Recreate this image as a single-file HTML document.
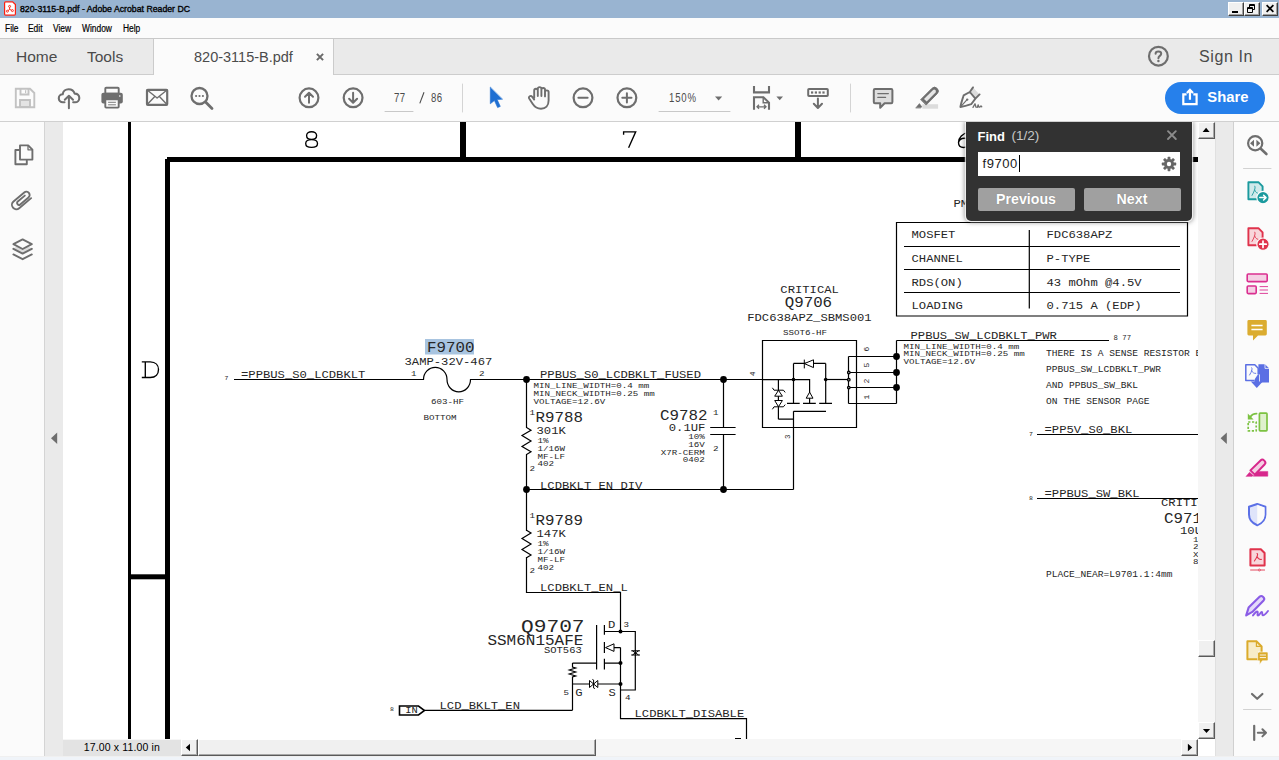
<!DOCTYPE html>
<html>
<head>
<meta charset="utf-8">
<title>820-3115-B.pdf - Adobe Acrobat Reader DC</title>
<style>
*{box-sizing:border-box;margin:0;padding:0}
html,body{width:1279px;height:760px;overflow:hidden;background:#fafafa;font-family:"Liberation Sans",sans-serif;}
.abs{position:absolute}
#titlebar{left:0;top:0;width:1279px;height:18px;background:#99b4d1}
#titletext{left:19.6px;top:2.7px;font-size:9.5px;line-height:12px;color:#000;white-space:nowrap;transform:scaleX(0.918);transform-origin:0 0;-webkit-text-stroke:0.35px #000}
#menubar{left:0;top:18px;width:1279px;height:20px;background:#fbfbfb}
#menubar span{position:absolute;top:3.6px;font-size:10px;line-height:13px;color:#000;transform:scaleX(0.84);transform-origin:0 0;-webkit-text-stroke:0.2px #000}
#tabbar{left:0;top:38px;width:1279px;height:37px;background:#eaeaea;border-top:1px solid #c9c9c9;border-bottom:1px solid #cdcdcd}
#tabactive{left:153px;top:39px;width:181px;height:36px;background:#fbfbfb;border-left:1px solid #cbcbcb;border-right:1px solid #cbcbcb}
.tabtxt{position:absolute;font-size:15.5px;line-height:18px;color:#4b4b4b;white-space:nowrap}
#toolbar{left:0;top:75px;width:1279px;height:47px;background:#fbfbfb;border-bottom:1px solid #d0d0d0}
#leftbar{left:0;top:122px;width:45px;height:634px;background:#fbfbfb;border-right:1px solid #d4d4d4}
#leftgut{left:45px;top:122px;width:18px;height:634px;background:#eaeaea}
#rightgut{left:1215px;top:122px;width:19px;height:634px;background:#eaeaea;border-right:1px solid #d0d0d0;border-left:1px solid #e0e0e0}
#rightbar{left:1234px;top:122px;width:45px;height:634px;background:#fbfbfb}
#bottomstrip{left:0;top:756px;width:1279px;height:4px;background:#f0f4f9;border-top:1px solid #f0f0f0}
#doc{left:63px;top:122px;width:1135px;height:617px;background:#fff;overflow:hidden}
#vscroll{left:1198px;top:122px;width:17px;height:617px;background:#f6f6f6}
#hscroll{left:63px;top:739px;width:1135px;height:17px;background:#f6f6f6}
#corner{left:1198px;top:739px;width:17px;height:17px;background:#fff}
.sbtn{position:absolute;background:#f0f0f0;border-right:1px solid #5a5a5a;border-bottom:1px solid #5a5a5a;border-left:1px solid #fff;border-top:1px solid #fff;box-shadow:inset -1px -1px 0 #a8a8a8}
.tnum{font-size:12px;line-height:14px;color:#4b4b4b;white-space:nowrap;transform:scaleX(0.8);transform-origin:0 0;letter-spacing:0.6px}
.wbtn{top:2px;width:16px;height:14px;background:#f0f0f0;border-top:1px solid #fff;border-left:1px solid #fff;border-right:1px solid #404040;border-bottom:1px solid #404040;box-shadow:inset -1px -1px 0 #a0a0a0}
#sch text{fill:#262626;stroke:none;white-space:pre}
.fbtn{top:187.7px;height:23.5px;background:#a0a0a0;border-radius:2px;color:#fff;font-weight:bold;font-size:14.2px;line-height:23.5px;text-align:center;text-shadow:0 0 1px rgba(0,0,0,0.25)}
</style>
</head>
<body>
<!-- document page -->
<div id="doc" class="abs"></div>
<svg id="sch" class="abs" style="left:0;top:0" width="1279" height="760" viewBox="0 0 1279 760" font-family="Liberation Mono, monospace" fill="none" stroke="#000">
<rect x="128" y="122" width="3" height="620" fill="#000" stroke="none"/>
<rect x="165" y="159" width="5" height="590" fill="#000" stroke="none"/>
<rect x="167" y="157" width="1040" height="5" fill="#000" stroke="none"/>
<rect x="460" y="122" width="6" height="36" fill="#000" stroke="none"/>
<rect x="795" y="122" width="6" height="36" fill="#000" stroke="none"/>
<rect x="130" y="574.3" width="36" height="5" fill="#000" stroke="none"/>
<path d="M311.6 131.7 C308.6 131.7 306.6 133.5 306.6 135.6 C306.6 137.8 308.6 139.5 311.6 139.5 C314.6 139.5 316.6 137.8 316.6 135.6 C316.6 133.5 314.6 131.7 311.6 131.7 Z M311.6 139.5 C308 139.5 305.7 141.3 305.7 143.5 C305.7 145.8 308 147.4 311.6 147.4 C315.2 147.4 317.5 145.8 317.5 143.5 C317.5 141.3 315.2 139.5 311.6 139.5 Z" stroke-width="1.35"/>
<path d="M623.6 134.8 V131.8 H635.7 L628.6 147.8" stroke-width="1.35"/>
<path d="M969 132.4 C962.4 133.2 958.5 137.6 958.5 142.6 C958.5 146 960.8 147.5 963.6 147.5 C967 147.5 969.2 145.4 969.2 142.6 C969.2 140 967.2 138.2 964.2 138.2 C961.4 138.2 959.2 140 958.6 142.4" stroke-width="1.35"/>
<path d="M141.8 361.8 H150.2 C155.8 361.8 158.5 365.4 158.5 369.6 C158.5 374 155.8 377.5 150.2 377.5 H141.8 M145.3 361.8 V377.5" stroke-width="1.35"/>
<rect x="425" y="339" width="49" height="15.5" fill="#a8c4e0" stroke="none"/>
<text transform="translate(427 351.7) scale(1 0.88)" font-size="15.8">F9700</text>
<text transform="translate(404.5 365.4) scale(1 0.88)" font-size="12.2">3AMP-32V-467</text>
<text transform="translate(224.5 379.6) scale(1 0.88)" font-size="6.5">7</text>
<text transform="translate(241 378.4) scale(1 0.88)" font-size="12.2">=PPBUS_S0_LCDBKLT</text>
<path d="M234 379.5 H423.5 A11.75 12.2 0 0 1 447 379.5 A11.75 12.4 0 0 0 470.5 379.5 H762.5" stroke-width="1.2"/>
<text transform="translate(411 375.9) scale(1 0.88)" font-size="9.2">1</text>
<text transform="translate(479 375.9) scale(1 0.88)" font-size="9.2">2</text>
<text transform="translate(431 404.2) scale(1 0.88)" font-size="9.2">603-HF</text>
<text transform="translate(423.5 419.9) scale(1 0.88)" font-size="9.2">BOTTOM</text>
<circle cx="526.5" cy="379.5" r="3.4" fill="#000" stroke="none"/>
<text transform="translate(540 378.4) scale(1 0.88)" font-size="12.2">PPBUS_S0_LCDBKLT_FUSED</text>
<text transform="translate(533.5 388.4) scale(1 0.88)" font-size="9.2">MIN_LINE_WIDTH=0.4 mm</text>
<text transform="translate(533.5 396.2) scale(1 0.88)" font-size="9.2">MIN_NECK_WIDTH=0.25 mm</text>
<text transform="translate(533.5 404.2) scale(1 0.88)" font-size="9.2">VOLTAGE=12.6V</text>
<path d="M526.5 379.5 V427.5 l4.5 2.7 l-9 5.4 l9 5.4 l-9 5.4 l9 5.4 l-4.5 2.7 V592.5 H620.5 V631.5" stroke-width="1.2"/>
<text transform="translate(529.5 415.4) scale(1 0.88)" font-size="9.2">1</text>
<text transform="translate(535.5 422.2) scale(1 0.88)" font-size="15.8">R9788</text>
<text transform="translate(536.5 434.2) scale(1 0.88)" font-size="12.2">301K</text>
<text transform="translate(537.5 442.9) scale(1 0.88)" font-size="9.2">1%</text>
<text transform="translate(537.5 450.9) scale(1 0.88)" font-size="9.2">1/16W</text>
<text transform="translate(537.5 458.9) scale(1 0.88)" font-size="9.2">MF-LF</text>
<text transform="translate(537.5 466.2) scale(1 0.88)" font-size="9.2">402</text>
<text transform="translate(529.5 470.9) scale(1 0.88)" font-size="9.2">2</text>
<circle cx="526.5" cy="489.5" r="3.4" fill="#000" stroke="none"/>
<path d="M526.5 489.5 H793.5" stroke-width="1.2"/>
<text transform="translate(540 489.2) scale(1 0.88)" font-size="12.2">LCDBKLT_EN_DIV</text>
<rect x="520" y="531" width="13" height="26" fill="#fff" stroke="none"/>
<path d="M526.5 530.2 l4.5 2.75 l-9 5.5 l9 5.5 l-9 5.5 l9 5.5 l-4.5 2.75" stroke-width="1.2"/>
<text transform="translate(529.5 517.9) scale(1 0.88)" font-size="9.2">1</text>
<text transform="translate(535.5 525.2) scale(1 0.88)" font-size="15.8">R9789</text>
<text transform="translate(536.5 537.4) scale(1 0.88)" font-size="12.2">147K</text>
<text transform="translate(537.5 546.2) scale(1 0.88)" font-size="9.2">1%</text>
<text transform="translate(537.5 554.2) scale(1 0.88)" font-size="9.2">1/16W</text>
<text transform="translate(537.5 562.2) scale(1 0.88)" font-size="9.2">MF-LF</text>
<text transform="translate(537.5 569.7) scale(1 0.88)" font-size="9.2">402</text>
<text transform="translate(529.5 573.2) scale(1 0.88)" font-size="9.2">2</text>
<text transform="translate(540 591.1) scale(1 0.88)" font-size="12.2">LCDBKLT_EN_L</text>
<text transform="translate(660 420.4) scale(1 0.88)" font-size="15.8">C9782</text>
<text transform="translate(705.4 430.8) scale(1 0.88)" font-size="12.2" text-anchor="end">0.1UF</text>
<text transform="translate(704.8 439.0) scale(1 0.88)" font-size="9.2" text-anchor="end">10%</text>
<text transform="translate(704.8 446.6) scale(1 0.88)" font-size="9.2" text-anchor="end">16V</text>
<text transform="translate(704.8 454.6) scale(1 0.88)" font-size="9.2" text-anchor="end">X7R-CERM</text>
<text transform="translate(704.8 462.4) scale(1 0.88)" font-size="9.2" text-anchor="end">0402</text>
<text transform="translate(713 415.4) scale(1 0.88)" font-size="9.2">1</text>
<text transform="translate(713 451.4) scale(1 0.88)" font-size="9.2">2</text>
<circle cx="723.5" cy="379.5" r="3.4" fill="#000" stroke="none"/>
<circle cx="723.5" cy="489.5" r="3.4" fill="#000" stroke="none"/>
<path d="M723.5 379.5 V427.5 M723.5 434.5 V489.5 M710.2 427.5 H735.6 M710.2 434.5 H735.6" stroke-width="1.2"/>
<text transform="translate(809.6 293.0) scale(1 0.88)" font-size="12.2" text-anchor="middle">CRITICAL</text>
<text transform="translate(808.4 306.8) scale(1 0.88)" font-size="15.8" text-anchor="middle">Q9706</text>
<text transform="translate(809.4 320.8) scale(1 0.88)" font-size="12.2" text-anchor="middle">FDC638APZ_SBMS001</text>
<text transform="translate(805 334.9) scale(1 0.88)" font-size="9.2" text-anchor="middle">SSOT6-HF</text>
<path d="M762.5 340.5 H856.5 V427.5 H762.5 Z" stroke-width="1.2"/>
<path d="M848.5 356.5 H896.5 M848.5 372.5 H896.5 M848.5 387.5 H896.5 M848.5 403.5 H896.5 M848.5 356.5 V403.5 M896.5 340.5 V403.5" stroke-width="1.2"/>
<path d="M825.3 379.5 H848.5" stroke-width="1.2"/>
<circle cx="896.5" cy="356.5" r="3.4" fill="#000" stroke="none"/>
<circle cx="896.5" cy="372.5" r="3.4" fill="#000" stroke="none"/>
<circle cx="896.5" cy="387.5" r="3.4" fill="#000" stroke="none"/>
<circle cx="848.8" cy="372.5" r="1.3" fill="#aaa" stroke-width="1.2"/>
<circle cx="848.8" cy="379.7" r="1.3" fill="#aaa" stroke-width="1.2"/>
<circle cx="848.8" cy="387.6" r="1.3" fill="#aaa" stroke-width="1.2"/>
<path d="M762.5 379.6 H809.6 V403.4 M793.5 363.4 H825.7 M793.5 363.4 V403.4 M825.7 363.4 V403.4 M787 403.4 H799.7 M803 403.4 H815.8 M819.2 403.4 H832 M793.5 411.3 H826 M793.5 411.3 V489.5 M778.4 419.2 H793.5 M778.4 379.6 V419.2" stroke-width="1.2"/>
<circle cx="793.5" cy="379.6" r="1.8" fill="#000" stroke="none"/>
<circle cx="825.7" cy="379.6" r="1.8" fill="#000" stroke="none"/>
<path d="M813.5 359.8 V367.6 L804.4 363.6 Z M804.3 359.6 V368.4" stroke-width="1" fill="#fff"/>
<path d="M806.2 398.2 H813 L809.6 392.2 Z" stroke-width="1" fill="#fff"/>
<path d="M774.7 396.2 H782.4 L778.5 390.3 Z M772.4 387.8 l1.6 2.4 H783.4 l1.8 2.2 M774.7 400.5 H782.4 L778.5 406.7 Z M772.4 409.3 l1.6 -2.5 H783.4 l1.8 -2.2" stroke-width="1" fill="#fff"/>
<g font-size="7.5" transform="rotate(-90 752 374)"><text x="750" y="376.6">4</text></g>
<g font-size="7.5" transform="rotate(-90 787 437)"><text x="785" y="439.6">3</text></g>
<g font-size="8" transform="rotate(-90 865.5 349)"><text x="863" y="352">6</text></g>
<g font-size="8" transform="rotate(-90 865.5 365)"><text x="863" y="368">5</text></g>
<g font-size="8" transform="rotate(-90 865.5 381)"><text x="863" y="384">2</text></g>
<g font-size="8" transform="rotate(-90 865.5 397)"><text x="863" y="400">1</text></g>
<text transform="translate(953.5 207.4) scale(1 0.88)" font-size="12.2">PM</text>
<path d="M896.5 222.5 H1187.5 V316 H896.5 Z" stroke-width="1.2"/>
<path d="M904 246.5 H1180 M904 269.5 H1180 M904 292.5 H1180 M1029.3 230 V308.5" stroke-width="1.2"/>
<text transform="translate(911.5 238.4) scale(1 0.88)" font-size="12.2">MOSFET</text>
<text transform="translate(1046.5 238.4) scale(1 0.88)" font-size="12.2">FDC638APZ</text>
<text transform="translate(911.5 262.0) scale(1 0.88)" font-size="12.2">CHANNEL</text>
<text transform="translate(1046.5 262.0) scale(1 0.88)" font-size="12.2">P-TYPE</text>
<text transform="translate(911.5 285.6) scale(1 0.88)" font-size="12.2">RDS(ON)</text>
<text transform="translate(1046.5 285.6) scale(1 0.88)" font-size="12.2">43 mOhm @4.5V</text>
<text transform="translate(911.5 309.2) scale(1 0.88)" font-size="12.2">LOADING</text>
<text transform="translate(1046.5 309.2) scale(1 0.88)" font-size="12.2">0.715 A (EDP)</text>
<text transform="translate(910.5 338.6) scale(1 0.88)" font-size="12.2">PPBUS_SW_LCDBKLT_PWR</text>
<path d="M896.5 340.5 H1109" stroke-width="1.2"/>
<text transform="translate(1113.6 339.7) scale(1 0.88)" font-size="7.3">8 77</text>
<text transform="translate(903.5 349.0) scale(1 0.88)" font-size="9.2">MIN_LINE_WIDTH=0.4 mm</text>
<text transform="translate(903.5 355.9) scale(1 0.88)" font-size="9.2">MIN_NECK_WIDTH=0.25 mm</text>
<text transform="translate(903.5 364.2) scale(1 0.88)" font-size="9.2">VOLTAGE=12.6V</text>
<text transform="translate(1046 356.0) scale(1 0.88)" font-size="9.6">THERE IS A SENSE RESISTOR BETWEEN</text>
<text transform="translate(1046 372.0) scale(1 0.88)" font-size="9.6">PPBUS_SW_LCDBKLT_PWR</text>
<text transform="translate(1046 388.0) scale(1 0.88)" font-size="9.6">AND PPBUS_SW_BKL</text>
<text transform="translate(1046 404.0) scale(1 0.88)" font-size="9.6">ON THE SENSOR PAGE</text>
<text transform="translate(1029 435.9) scale(1 0.88)" font-size="6.5">7</text>
<text transform="translate(1044.5 432.8) scale(1 0.88)" font-size="12.2">=PP5V_S0_BKL</text>
<path d="M1037 434.5 H1200" stroke-width="1.2"/>
<text transform="translate(1029 499.9) scale(1 0.88)" font-size="6.5">8</text>
<text transform="translate(1044.5 496.8) scale(1 0.88)" font-size="12.2">=PPBUS_SW_BKL</text>
<path d="M1037 498.5 H1200" stroke-width="1.2"/>
<text transform="translate(1161 506.4) scale(1 0.88)" font-size="12.2">CRITICAL</text>
<text transform="translate(1164 522.9) scale(1 0.88)" font-size="15.8">C9710</text>
<text transform="translate(1180 533.9) scale(1 0.88)" font-size="12.2">10UF</text>
<text transform="translate(1193 542.4) scale(1 0.88)" font-size="9.2">1</text>
<text transform="translate(1193 548.9) scale(1 0.88)" font-size="9.2">2</text>
<text transform="translate(1193 557.4) scale(1 0.88)" font-size="9.2">X</text>
<text transform="translate(1193 564.4) scale(1 0.88)" font-size="9.2">8</text>
<text transform="translate(1046 577.0) scale(1 0.88)" font-size="9.6">PLACE_NEAR=L9701.1:4mm</text>
<text transform="translate(521 632.2) scale(1 0.88)" font-size="21.2">Q9707</text>
<text transform="translate(487.4 644.7) scale(1 0.88)" font-size="16.0">SSM6N15AFE</text>
<text transform="translate(544 653.0) scale(1 0.88)" font-size="10.5">SOT563</text>
<text transform="translate(608 627.9) scale(1 0.88)" font-size="12.2">D</text>
<text transform="translate(623.5 627.4) scale(1 0.88)" font-size="9.2">3</text>
<path d="M620.5 631.5 H635.3 V690 H620.5 M604.4 631.5 H620.5 M596.6 625 V669.5 M604.4 625 V634.8 M604.4 642 V653 M604.4 658.8 V669.5 M620.5 647.6 V718.7 H746.5 V742 M614 647.6 H620.5 M604.4 663.1 H620.5 M572.5 663.1 H596.6 M572.5 663.1 V667 l3.2 1 l-6.4 2 l6.4 2 l-6.4 2 l6.4 2 l-3.2 1 V710.3 M572.5 684 H620.5 M424.5 710.3 H572.5" stroke-width="1.2"/>
<circle cx="620.5" cy="631.5" r="2" fill="#000" stroke="none"/>
<circle cx="620.5" cy="663.1" r="2" fill="#000" stroke="none"/>
<circle cx="620.5" cy="684" r="2" fill="#000" stroke="none"/>
<path d="M614 643.8 V651.4 L605.5 647.6 Z" stroke-width="1" fill="#fff"/>
<path d="M631.2 650.8 H640 M631.2 655 H640 M632.4 650.8 L638.6 655 M638.6 650.8 L632.4 655" stroke-width="1" fill="#fff"/>
<path d="M589.5 680.5 V687.5 L593.6 684 Z M597.8 680.5 V687.5 L593.6 684 Z M593.6 680 V688 M592.4 679.4 l1.2 0.6 M593.6 688 l1.2 0.6" stroke-width="1" fill="#fff"/>
<text transform="translate(563.5 695.0) scale(1 0.88)" font-size="9.2">5</text>
<text transform="translate(575.3 696.0) scale(1 0.88)" font-size="12.2">G</text>
<text transform="translate(608.5 696.4) scale(1 0.88)" font-size="12.2">S</text>
<text transform="translate(625 700.2) scale(1 0.88)" font-size="9.2">4</text>
<text transform="translate(439.5 708.6) scale(1 0.88)" font-size="12.2">LCD_BKLT_EN</text>
<text transform="translate(634.5 717.0) scale(1 0.88)" font-size="12.2">LCDBKLT_DISABLE</text>
<text transform="translate(390 711.4) scale(1 0.88)" font-size="6.5">8</text>
<path d="M399.5 706 H418.5 L424.5 710.5 L418.5 715 H399.5 Z" stroke-width="1.6"/>
<text transform="translate(405.3 713.2) scale(1 0.88)" font-size="10.4">IN</text>
<path d="M735 738.5 H741" stroke-width="1"/>
</svg>

<!-- chrome -->
<div id="titlebar" class="abs"></div>
<div id="titletext" class="abs">820-3115-B.pdf - Adobe Acrobat Reader DC</div>

<svg class="abs" style="left:3px;top:0px" width="16" height="18" viewBox="3 0 16 18"><path d="M5.6 1.8 H12.6 L15.4 4.6 V14 Q15.4 15.2 14.2 15.2 H5.6 Q4.6 15.2 4.6 14 V3 Q4.6 1.8 5.6 1.8 Z" fill="#fff" stroke="#fa1e10" stroke-width="1.2"/><g fill="none" stroke="#fa1e10" stroke-width="0.9"><circle cx="9.6" cy="6.4" r="1"/><circle cx="7.4" cy="11.2" r="1"/><circle cx="12.4" cy="10.6" r="1"/><path d="M9.6 7.4 L9.6 9.4 L8 10.6 M9.6 9.4 L11.6 10.2"/></g></svg>
<div class="abs wbtn" style="left:1228px"></div><div class="abs wbtn" style="left:1244px"></div><div class="abs wbtn" style="left:1262px"></div>
<svg class="abs" style="left:1228px;top:2px" width="50" height="14" viewBox="1228 2 50 14" fill="none" stroke="#000"><rect x="1232" y="11" width="6" height="2" fill="#000" stroke="none"/><path d="M1249.5 9 V4.5 H1254.5 V9.5 H1253 M1249.5 5.5 H1254.5" stroke-width="1"/><path d="M1247.5 7.5 H1252.5 V12.5 H1247.5 Z M1247.5 8.5 H1252.5" stroke-width="1"/><path d="M1266.6 5.2 L1273.4 11.8 M1273.4 5.2 L1266.6 11.8" stroke-width="1.7"/></svg>
<div id="menubar" class="abs">
<span style="left:4.5px">File</span><span style="left:27.5px">Edit</span><span style="left:53px">View</span><span style="left:81.5px">Window</span><span style="left:122.5px">Help</span>
</div>
<div id="tabbar" class="abs"></div>
<div id="tabactive" class="abs"></div>
<div class="tabtxt" style="left:16px;top:48px">Home</div>
<div class="tabtxt" style="left:87px;top:48px">Tools</div>
<div class="tabtxt" style="left:194px;top:48px;font-size:14.5px">820-3115-B.pdf</div>
<div class="tabtxt" style="left:1199px;top:47.5px;font-size:16px;letter-spacing:0.6px">Sign In</div>
<div id="toolbar" class="abs"></div>

<svg id="tbicons" class="abs" style="left:0;top:75px" width="1279" height="47" viewBox="0 75 1279 47" fill="none" stroke="#6e6e6e" stroke-width="1.6" stroke-linecap="round" stroke-linejoin="round">
<!-- save (disabled) -->
<g stroke="#c2c2c2" stroke-width="1.9" stroke-linejoin="miter">
<path d="M15.8 88.8 H30 L34.3 93 V107.2 H15.8 Z"/>
<path d="M20.5 89 V94.5 H28.5 V89" />
<path d="M25.6 90.5 V92.6" stroke-width="1.2"/>
<path d="M20 107 V100 H30 V107 Z" fill="#e4e4e4"/>
</g>
<!-- cloud upload -->
<path d="M64.5 102.3 H63 C60.3 102.3 58.8 100.3 58.8 98.2 C58.8 96 60.5 94.3 62.7 94.3 C63 91.2 65.6 89.2 68.6 89.2 C71.6 89.2 73.9 91 74.6 93.6 C77.4 93.4 79.3 95.5 79.3 97.9 C79.3 100.3 77.6 102.3 75 102.3 H73.2" stroke-width="2.1"/>
<path d="M68.9 108.3 V96.2 M64.8 99.8 L68.9 95.8 L73 99.8" stroke-width="2"/>
<!-- printer -->
<rect x="105.3" y="87.7" width="13.4" height="6" rx="0.8" stroke-width="1.9"/>
<rect x="101.4" y="92.8" width="21.4" height="10.6" rx="2" fill="#6e6e6e" stroke="none"/>
<rect x="105.3" y="99.2" width="13.4" height="8.4" rx="0.8" fill="#fbfbfb" stroke-width="1.9"/>
<path d="M108.5 102.3 H115.5 M108.5 104.8 H115.5" stroke-width="0.9"/>
<circle cx="119.8" cy="96" r="0.8" fill="#fbfbfb" stroke="none"/>
<!-- mail -->
<rect x="147" y="89.8" width="20.2" height="15" rx="0.8" stroke-width="2.2"/>
<path d="M147.2 90 L157.1 98 L167 90 M147.2 104.6 L154.8 96.4 M167 104.6 L159.4 96.4" stroke-width="1.4"/>
<!-- search -->
<circle cx="199.5" cy="96" r="8" stroke-width="2.3"/>
<path d="M205.8 102.3 L212 108.5" stroke-width="2.8"/>
<g fill="#6e6e6e" stroke="none"><circle cx="196.1" cy="96" r="1.1"/><circle cx="199.5" cy="96" r="1.1"/><circle cx="202.9" cy="96" r="1.1"/></g>
<!-- page up / down -->
<circle cx="309" cy="97.8" r="9.4" stroke-width="2.2"/>
<path d="M309 102.8 V93.2 M305 96.8 L309 92.8 L313 96.8" stroke-width="2"/>
<circle cx="353.1" cy="97.8" r="9.4" stroke-width="2.2"/>
<path d="M353.1 92.8 V102.4 M349.1 98.8 L353.1 102.8 L357.1 98.8" stroke-width="2"/>
<!-- page input underline + separators -->
<path d="M385 111.5 H413" stroke="#c8c8c8" stroke-width="1"/>
<path d="M419.8 103.4 L424 92.2" stroke="#4b4b4b" stroke-width="1.1" stroke-linecap="butt"/>
<path d="M462.5 84 V112" stroke="#d4d4d4" stroke-width="1"/>
<path d="M850.5 84 V112" stroke="#d4d4d4" stroke-width="1"/>
<path d="M659 111.5 H730" stroke="#c8c8c8" stroke-width="1"/>
<!-- select arrow (blue) -->
<path d="M490.3 87.4 L490.3 103.8 L494.4 100.6 L497.6 107.6 L500.3 106.4 L497.2 99.6 L502.2 99.2 Z" fill="#1f6fd2" stroke="#1f6fd2" stroke-width="0.6" stroke-linejoin="round"/>
<!-- hand -->
<path d="M534.2 98 V90.4 C534.2 88.2 537.8 88.2 537.8 90.4 V96 M537.8 90 V88.8 C537.8 86.6 541.4 86.6 541.4 88.8 V96 M541.4 89.6 C541.4 87.4 545 87.4 545 89.6 V96.4 M545 92 C545 89.8 548.6 89.8 548.6 92 V100.6 C548.6 105.8 545.6 108.8 541 108.8 C537 108.8 534.8 107.2 532.6 103.8 L529.2 98.6 C528 96.6 530.8 95 532.2 96.8 L534.2 99.6" stroke-width="1.9"/>
<!-- zoom out / in -->
<circle cx="583" cy="97.8" r="9.4" stroke-width="2.2"/>
<path d="M578.4 97.8 H587.6" stroke-width="2"/>
<circle cx="626.9" cy="97.8" r="9.4" stroke-width="2.2"/>
<path d="M622.3 97.8 H631.5 M626.9 93.2 V102.4" stroke-width="2"/>
<!-- zoom dropdown triangle -->
<path d="M715 96.4 H722.2 L718.6 100.4 Z" fill="#6e6e6e" stroke="none"/>
<!-- fit width -->
<g stroke-linejoin="miter" stroke-linecap="butt">
<path d="M754 86 V92.4 H769 V86" stroke-width="2.1"/>
<path d="M754 109.8 V97.2 H763.4 L769 102.6 V109.8" stroke-width="2.1"/>
<path d="M763.2 97.4 V102.8 H768.8" stroke-width="1.4"/>
<path d="M757.2 106.8 H765.8 M759 104.8 L757 106.8 L759 108.8 M764 104.8 L766 106.8 L764 108.8" stroke-width="1.3"/>
</g>
<path d="M776.4 96.4 H783 L779.7 100.2 Z" fill="#6e6e6e" stroke="none"/>
<!-- keyboard/scroll icon -->
<rect x="808.2" y="89" width="19.6" height="7" rx="0.8" stroke-width="2"/>
<g fill="#6e6e6e" stroke="none"><rect x="811" y="91.4" width="2.2" height="2.2"/><rect x="814.8" y="91.4" width="2.2" height="2.2"/><rect x="818.6" y="91.4" width="2.2" height="2.2"/><rect x="822.4" y="91.4" width="2.2" height="2.2"/></g>
<path d="M817.9 98.6 V107.8 M813.8 103.8 L817.9 108 L822 103.8" stroke-width="2"/>
<!-- comment -->
<path d="M875 89 H891.2 Q892.4 89 892.4 90.2 V102 Q892.4 103.2 891.2 103.2 H884.6 L880.2 107.8 V103.2 H875 Q873.8 103.2 873.8 102 V90.2 Q873.8 89 875 89 Z" fill="#dedede" stroke-width="2"/>
<path d="M877.8 93.6 H888.4 M877.8 97.4 H885.6" stroke-width="1.2"/>
<!-- highlighter -->
<g stroke="none">
<rect x="922.3" y="104.2" width="15.8" height="4.5" fill="#dcdcdc"/>
<path d="M926.4 104.8 L937.2 93.8 A3.8 3.8 0 0 0 931.8 88.4 L920.8 99.4 Z" fill="#6e6e6e" stroke="#6e6e6e" stroke-width="0.8" stroke-linejoin="round"/>
<path d="M926.7 101.5 L935.6 92.4 A1.8 1.8 0 0 0 933.1 89.9 L924 99 Z" fill="#e6e6e6"/>
<path d="M915.9 107.8 L919.4 103.6 L921.8 106.8 L920.8 107.8 Z" fill="#6e6e6e" stroke="#6e6e6e" stroke-width="0.6" stroke-linejoin="round"/>
</g>
<!-- sign pen -->
<path d="M973 87.6 L979.6 94.4 L975.4 98.6 L969.8 92 Z" fill="#dcdcdc" stroke="none"/>
<path d="M969.8 92 L963.6 95.4 C962.4 99.4 961 103.4 960.4 107 C964 106.6 968 105.4 971.2 104.2 L975.4 98.6 Z M969.8 92 L973 87.4 M975.4 98.6 L979.6 94.4" stroke-width="1.9"/>
<path d="M961.2 106.2 L966.6 100.2" stroke-width="1.2"/>
<circle cx="967.2" cy="99.6" r="1.2" fill="#6e6e6e" stroke="none"/>
<path d="M973 107.4 L975 103.8 L976 107.2 M977.2 107.4 L978.2 104.8 L978.8 107 M979.8 107.2 C980.4 105.8 981 105.6 981.8 106.8" stroke-width="1.3"/>
</svg>
<div class="abs tnum" style="left:393.5px;top:91px">77</div>
<div class="abs tnum" style="left:430.5px;top:91px">86</div>
<div class="abs tnum" style="left:668.5px;top:91px;letter-spacing:1px">150%</div>
<!-- share button -->
<div class="abs" style="left:1165px;top:82px;width:100px;height:32px;border-radius:16px;background:#2680eb"></div>
<svg class="abs" style="left:1180px;top:86.6px" width="20" height="20" viewBox="0 0 20 20" fill="none" stroke="#fff" stroke-width="2.2" stroke-linejoin="miter"><path d="M6.6 7.4 H3.3 V17.2 H16.6 V7.4 H13.3"/><path d="M9.95 12.8 V3.4 M6.9 6 L9.95 2.9 L13 6" stroke-linecap="butt" stroke-linejoin="miter"/></svg>
<div class="abs" style="left:1207.3px;top:88.3px;font-size:14.8px;line-height:19px;color:#fff;font-weight:bold;white-space:nowrap">Share</div>
<!-- help icon -->
<svg class="abs" style="left:1146px;top:44px" width="24" height="24" viewBox="0 0 24 24" fill="none" stroke="#6e6e6e" stroke-width="2.2"><circle cx="12.4" cy="12.2" r="9.4"/><path d="M9.6 9.8 C9.6 6.8 15.2 6.8 15.2 9.8 C15.2 11.8 12.4 12 12.4 14.2" stroke-width="2" stroke-linecap="round"/><circle cx="12.4" cy="17" r="1.2" fill="#6e6e6e" stroke="none"/></svg>
<!-- tab close -->
<svg class="abs" style="left:315.3px;top:51.5px" width="10" height="10" viewBox="0 0 10 10" stroke="#6a6a6a" stroke-width="2"><path d="M1.9 1.9 L8.1 8.1 M8.1 1.9 L1.9 8.1"/></svg>

<div id="leftbar" class="abs"></div>
<div id="leftgut" class="abs"></div>
<div id="vscroll" class="abs"></div>
<div id="hscroll" class="abs"></div>
<div id="corner" class="abs"></div>

<!-- vertical scroll -->
<div class="sbtn" style="left:1198px;top:122px;width:17px;height:17px"></div>
<div class="sbtn" style="left:1198px;top:640px;width:17px;height:17px"></div>
<div class="sbtn" style="left:1198px;top:722px;width:17px;height:17px"></div>
<svg class="abs" style="left:1198px;top:122px" width="17" height="617" viewBox="0 0 17 617" fill="#000"><path d="M4.6 9.9 H11.6 L8.1 5.8 Z"/><path d="M4.9 607 H12.1 L8.5 611.1 Z"/></svg>
<!-- horizontal scroll -->
<div class="abs" style="left:63px;top:740px;width:118px;height:16px;background:#e3e3e3"></div>
<div class="abs" style="left:83.7px;top:741px;font-size:10.5px;line-height:13px;color:#000;white-space:nowrap;letter-spacing:0.15px">17.00 x 11.00 in</div>
<div class="sbtn" style="left:181px;top:739px;width:17px;height:17px"></div>
<div class="sbtn" style="left:198px;top:739px;width:398px;height:17px"></div>
<div class="sbtn" style="left:1181px;top:739px;width:17px;height:17px"></div>
<svg class="abs" style="left:63px;top:739px" width="1135" height="17" viewBox="63 0 1135 17" fill="#000"><path d="M190 4.8 V12.2 L185.8 8.5 Z"/><path d="M1187.9 4.8 V12.2 L1192.2 8.5 Z"/></svg>
<div id="rightgut" class="abs"></div>
<div id="rightbar" class="abs"></div>
<div id="bottomstrip" class="abs"></div>

<!-- left sidebar icons -->
<svg class="abs" style="left:0;top:122px" width="63" height="634" viewBox="0 122 63 634" fill="none" stroke="#6e6e6e" stroke-width="1.9" stroke-linejoin="round" stroke-linecap="round">
<path d="M19.2 150 H15.4 V164.2 H26.8 V160.6" />
<path d="M20 145.4 H28.2 L32.4 149.6 V159.6 H20 Z" fill="#fbfbfb"/>
<path d="M28 145.6 V149.8 H32.2" stroke-width="1.3"/>
<g transform="translate(21.7 200.3) rotate(-40)"><path d="M8.6 4.4 L-7 4.4 A4.4 4.4 0 0 1 -7 -4.4 L7 -4.4 A3.3 3.3 0 0 1 7 2.2 L-3.8 2.2 A1.9 1.9 0 0 1 -3.8 -1.6 L5.4 -1.6" stroke-width="1.9"/></g>
<path d="M22.6 243.4 L32 248.4 L22.6 253.4 L13.2 248.4 Z" fill="#dcdcdc" stroke="none"/>
<path d="M22.6 239.4 L31.8 244.2 L22.6 249 L13.4 244.2 Z" fill="#fbfbfb"/>
<path d="M13.4 248.8 L22.6 253.6 L31.8 248.8 M13.4 254.4 L22.6 259.2 L31.8 254.4" />
<path d="M57.2 432.6 V444 L51 438.3 Z" fill="#6e6e6e" stroke="none"/>
</svg>
<!-- right sidebar icons -->
<svg class="abs" style="left:1216px;top:122px" width="63" height="634" viewBox="1216 122 63 634" fill="none" stroke-width="1.6" stroke-linejoin="round" stroke-linecap="round">
<path d="M1226.8 432.6 V444 L1220.6 438.3 Z" fill="#6e6e6e"/>
<g stroke="#6e6e6e">
<circle cx="1255.2" cy="143.3" r="7.1" stroke-width="2.2"/><path d="M1260.8 148.8 L1266.4 154" stroke-width="2.6"/>
<path d="M1254 139.8 V146.8 L1250 143.3 Z M1256.4 139.8 V146.8 L1260.4 143.3 Z" fill="#6e6e6e" stroke="none"/>
<path d="M1243.5 168.5 H1271 M1243.5 709.5 H1271" stroke="#d2d2d2" stroke-width="1"/>
<path d="M1252 694 L1257.2 698.8 L1262.4 694" stroke-width="2.2"/>
<path d="M1254.2 725.8 V740" stroke-width="2.2"/><path d="M1257.8 732.8 H1265.8 M1262.4 729.2 L1266 732.8 L1262.4 736.4" stroke-width="2"/>
</g>
<!-- export pdf -->
<g stroke="#1b9a9e"><path d="M1248.4 182.2 H1258.4 L1262.6 186.4 V199.2 H1248.4 Z" fill="#cfe9ea" stroke-width="1.9"/>
<path d="M1254.6 186 C1255.8 186 1255.2 190 1252 195.4 M1254.6 190 C1255.6 192.6 1257.6 193.8 1259.6 193.6" stroke-width="0.9"/>
<circle cx="1263" cy="197.6" r="6.2" fill="#1b9a9e" stroke="#fbfbfb" stroke-width="1.2"/><path d="M1259.8 197.6 H1265.6 M1263.6 195.2 L1266 197.6 L1263.6 200" stroke="#fff" stroke-width="1.5"/></g>
<!-- create pdf -->
<g stroke="#e0334c"><path d="M1248.4 228.2 H1258.4 L1262.6 232.4 V245.2 H1248.4 Z" fill="#f8d6db" stroke-width="1.9"/>
<path d="M1254.6 232 C1255.8 232 1255.2 236 1252 241.4 M1254.6 236 C1255.6 238.6 1257.6 239.8 1259.6 239.6" stroke-width="0.9"/>
<circle cx="1263" cy="244.2" r="6.2" fill="#e0334c" stroke="#fbfbfb" stroke-width="1.2"/><path d="M1259.8 244.2 H1266.2 M1263 241 V247.4" stroke="#fff" stroke-width="1.7"/></g>
<!-- edit pdf -->
<g stroke="#da2f90" stroke-linejoin="miter"><rect x="1247.2" y="274" width="20" height="7.6" rx="1" fill="#f4d0e4" stroke-width="1.6"/><rect x="1247.2" y="286" width="9" height="7.6" rx="1" fill="#f4d0e4" stroke-width="1.6"/><path d="M1260 286.6 H1267.6 M1260 290 H1267.6 M1260 293.4 H1267.6" stroke-width="0.9"/></g>
<!-- comment -->
<path d="M1248.8 320 H1265.4 Q1266.8 320 1266.8 321.4 V334 Q1266.8 335.4 1265.4 335.4 H1258 L1253 340.6 V335.4 H1248.8 Q1247.4 335.4 1247.4 334 V321.4 Q1247.4 320 1248.8 320 Z" fill="#dbac30" stroke="none"/>
<path d="M1251.4 325.6 H1262.6 M1251.4 329.6 H1262.6" stroke="#fff" stroke-width="1.5" stroke-linecap="butt"/>
<!-- combine -->
<g fill="#5b6fe4" stroke="none"><path d="M1258.4 364.2 H1265 L1269 368.2 V382.6 H1260 V374.6 H1258.4 Z"/><path d="M1254.4 374.4 H1259.2 V381.6 H1262.8 L1256.8 388 L1250.8 381.6 H1254.4 Z"/></g>
<path d="M1253.8 380.6 H1245.8 V364.8 H1254.8 L1258.2 368.2 V374" stroke="#5b6fe4" stroke-width="1.5" fill="#fbfbfb"/>
<path d="M1251.6 367.6 C1252.6 367.6 1252.4 370.6 1249.6 375 M1251.6 370.6 C1252.4 372.6 1254 373.6 1255.8 373.4" stroke="#5b6fe4" stroke-width="0.9"/>
<path d="M1265 364.4 V368.4 H1268.8" stroke="#fbfbfb" stroke-width="0.8"/>
<!-- organize -->
<g stroke="#7cc242"><rect x="1259.4" y="413.2" width="7.6" height="17.6" rx="0.8" fill="#dff1cd" stroke-width="1.7"/>
<path d="M1248.2 422 H1256.2 V430.8 H1248.2 Z" stroke-width="1.7" stroke-dasharray="2.2 1.6" stroke-linecap="butt"/>
<path d="M1256.6 413.6 C1253.6 413.6 1251.4 415 1250 417.4" stroke-width="1.7"/><path d="M1247.8 413.6 V419.4 H1253.6 Z" fill="#7cc242" stroke="none"/></g>
<!-- redact -->
<g stroke="#d7288c"><path d="M1253.4 476.2 H1267.8 V471.4 H1258 Z" fill="#d7288c" stroke-width="0.5"/><path d="M1246.2 476.2 L1249.6 472.2 L1253.2 475.4 L1252.4 476.2 Z" fill="#d7288c" stroke-width="0.5"/>
<path d="M1250.4 470.4 L1260.8 460.2 C1262.8 458.2 1266.8 462 1264.8 464.2 L1254.8 474.6 Z" fill="#f4d0e4" stroke-width="2"/></g>
<!-- protect -->
<path d="M1257.2 504 L1265.4 506.8 V514.6 C1265.4 519.8 1262 523.4 1257.2 525.2 C1252.4 523.4 1249 519.8 1249 514.6 V506.8 Z" fill="#dfe4fa" stroke="#5b70e6" stroke-width="2"/>
<path d="M1257.2 504.8 L1264.6 507.4 V514.6 C1264.6 519.4 1261.4 522.6 1257.2 524.4 Z" fill="#fbfbfb" stroke="none"/>
<!-- compress -->
<g stroke="#e0334c"><path d="M1250.4 549.2 H1260.8 L1264.6 553 V565.4 H1250.4 Z" fill="#f8d6db" stroke-width="2"/>
<path d="M1257 553.6 C1258.2 553.6 1257.6 556.6 1254.4 561 M1257 556.4 C1257.8 558.6 1259.4 559.6 1261.4 559.4" stroke-width="1.1"/>
<path d="M1250.6 570 H1257.6 M1261 570 H1264.6" stroke-width="0.9"/><circle cx="1259.3" cy="570" r="1" stroke-width="0.8"/></g>
<!-- fill & sign -->
<g stroke="#8a5ce6"><path d="M1246.2 615.4 L1248.6 607.6 L1259.8 596.6 C1261.8 594.8 1265.6 598.2 1263.6 600.4 L1252.8 611.6 Z" fill="#e4dafa" stroke-width="2.1"/>
<path d="M1253 615.4 C1255 612.8 1256.8 610.8 1257.6 611.6 C1258.4 612.6 1256.6 615.6 1258 615.6 C1259.4 615.6 1260.6 611.8 1261.8 612 C1263 612.2 1261.6 615.4 1263 615.4 C1264.6 615.4 1266 613.6 1268 611" stroke-width="1.9"/></g>
<!-- doc comment -->
<g stroke="#dbab2b"><path d="M1247.4 641.2 H1256.4 L1261.6 646.4 V659.2 H1247.4 Z" fill="#f7ecc8" stroke-width="2"/><path d="M1256.4 641.4 V646.4 H1261.4" stroke-width="1.2"/>
<path d="M1258.6 652 H1267 Q1268 652 1268 653 V659.8 Q1268 660.8 1267 660.8 H1262.4 L1259.6 664.4 V660.8 H1258.6 Q1257.6 660.8 1257.6 659.8 V653 Q1257.6 652 1258.6 652 Z" fill="#dbab2b" stroke="#fbfbfb" stroke-width="0.6"/>
<path d="M1260.2 655 H1265.6 M1260.2 657.6 H1265.6" stroke="#fff" stroke-width="0.9"/></g>
</svg>

<!-- find panel -->
<div class="abs" style="left:965.7px;top:122px;width:226.5px;height:99px;background:#323232;border-radius:0 0 5px 5px;box-shadow:0 0 0 1.2px rgba(255,255,255,0.75),0 0 5px 1px rgba(0,0,0,0.5);clip-path:inset(0 -10px -10px -10px)"></div>
<div class="abs" style="left:977.5px;top:128.5px;font-size:13px;line-height:16px;font-weight:bold;color:#fff;white-space:nowrap">Find</div>
<div class="abs" style="left:1011.5px;top:128px;font-size:13.5px;line-height:16px;color:#c8c8c8;white-space:nowrap">(1/2)</div>
<svg class="abs" style="left:1166px;top:129px" width="12" height="12" viewBox="0 0 12 12" stroke="#8c8c8c" stroke-width="1.9" stroke-linecap="round"><path d="M2 2.2 L9.8 10 M9.8 2.2 L2 10"/></svg>
<div class="abs" style="left:977.5px;top:152px;width:202.5px;height:24px;background:#fff"></div>
<div class="abs" style="left:982.5px;top:156px;font-size:13px;line-height:16px;color:#1a1a1a;white-space:nowrap;letter-spacing:0.55px">f9700</div>
<div class="abs" style="left:1018.5px;top:155px;width:1px;height:17px;background:#000"></div>
<svg class="abs" style="left:1161px;top:156px" width="16" height="16" viewBox="0 0 16 16"><g fill="#666"><circle cx="8" cy="8" r="5"/><g id="teeth"><rect x="6.6" y="0.8" width="2.8" height="14.4" rx="0.6"/><rect x="6.6" y="0.8" width="2.8" height="14.4" rx="0.6" transform="rotate(45 8 8)"/><rect x="6.6" y="0.8" width="2.8" height="14.4" rx="0.6" transform="rotate(90 8 8)"/><rect x="6.6" y="0.8" width="2.8" height="14.4" rx="0.6" transform="rotate(135 8 8)"/></g></g><circle cx="8" cy="8" r="2.2" fill="#fff"/></svg>
<div class="abs fbtn" style="left:977.5px;width:97px">Previous</div>
<div class="abs fbtn" style="left:1083.5px;width:97px">Next</div>
</body>
</html>
